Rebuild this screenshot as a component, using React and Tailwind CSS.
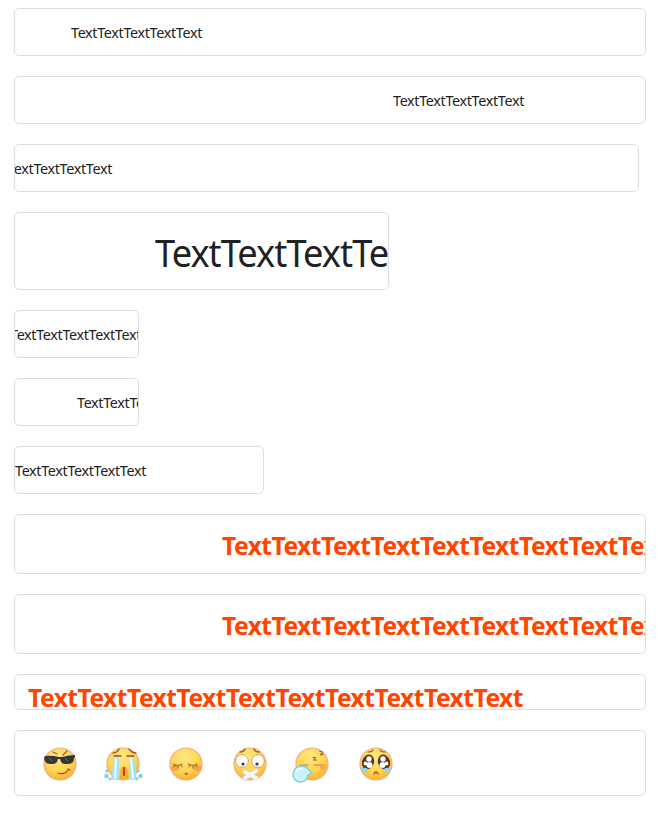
import React from "react";

const T5 = "TextTextTextTextText";
const T10 = T5 + T5;
const small = "text-[15px] leading-[22px] tracking-[-0.35px] text-[#202122] scale-x-[0.956]";
const bold = "text-[25px] leading-[36px] tracking-[-0.5px] font-bold text-[#ff4500] scale-x-[0.982]";

function Row({ box, text, children = T5 }) {
  return (
    <div className={`shrink-0 overflow-hidden rounded-[5px] border border-[#dedede] bg-white ${box}`}>
      <span className={`block w-max origin-left whitespace-nowrap ${text}`}>{children}</span>
    </div>
  );
}

function Face({ id, className, children }) {
  return (
    <svg viewBox="0 0 44 40" className={`h-10 w-11 shrink-0 ${className}`} fill="none" strokeLinecap="round" strokeLinejoin="round">
      <defs>
        <radialGradient id={id} cx="45%" cy="28%" r="75%">
          <stop offset="0" stopColor="#ffe783" />
          <stop offset="0.6" stopColor="#ffd552" />
          <stop offset="1" stopColor="#f8ad35" />
        </radialGradient>
      </defs>
      <circle cx="22" cy="20" r="16" fill={`url(#${id})`} stroke="#f0b07c" strokeWidth="1.2" />
      {children}
    </svg>
  );
}

function Emojis() {
  return (
    <div className="flex pl-[23px] pt-[13px]">
      <Face id="cool">
        <path d="M15 8l4 2M29 7l-4 4" stroke="#a5532b" strokeWidth="1.2" />
        <path d="M7 12Q13 11 21 13h3Q31 11 37 11v2l-1 1q0 6-6 6h-3q-4 0-5-5h-2q-1 5-5 5h-3q-5 0-6-6z" fill="#33373a" />
        <path d="M11 14l3 3m13-3 3 3" stroke="#666d70" strokeWidth="1" />
        <path d="M20 29q7 2 10-3M30 25l2 1" stroke="#a84c26" strokeWidth="1.3" />
      </Face>
      <Face id="cry" className="ml-[19px]">
        <path d="M12 9q4 0 6-4M28 5q3 4 7 4M13 12h7m6 0h7" stroke="#985225" strokeWidth="1.3" />
        <path d="M13 14h5v21q-4 2-8 0zM28 14h5l3 21q-4 2-8 0z" fill="#a4e3ef" />
        <path d="M15 15l-1 19m16-19 2 19" stroke="#effdff" strokeWidth="2" />
        <path d="M20 35v-8q0-4 3-4t3 4v8" fill="#f5b52f" stroke="#dda13c" strokeWidth=".8" />
        <path d="M23 24v7" stroke="#e12e17" strokeWidth="2" />
        <g fill="#8bd0e0"><circle cx="6" cy="27" r="1.8" /><circle cx="5.5" cy="32" r="2.3" /><circle cx="9" cy="35" r="1.6" /><circle cx="37" cy="27" r="1.8" /><circle cx="39.5" cy="32" r="2.3" /><circle cx="36" cy="35" r="1.6" /></g>
      </Face>
      <Face id="shy" className="ml-[19px]">
        <ellipse cx="11" cy="24" rx="4" ry="3" fill="#f39245" opacity=".65" />
        <ellipse cx="33" cy="24" rx="4" ry="3" fill="#f39245" opacity=".65" />
        <path d="M9 20q4 3 9 0M24 20q5 3 9 0M11 21l-1 2m4-1v2m3-3 1 2m8-2-1 2m4-1v2m3-3 1 2" stroke="#9b5927" strokeWidth="1" />
        <path d="M21 30l1.5.6 1.5-.6-1.5-1z" fill="#c94c25" stroke="#c94c25" strokeWidth=".6" />
      </Face>
      <Face id="mute" className="ml-5">
        <path d="M12 8q4 0 5-3M26 5q1 3 5 3" stroke="#985225" strokeWidth="1.3" />
        <circle cx="14" cy="17" r="6.4" fill="#fff" stroke="#d99b58" strokeWidth=".9" />
        <circle cx="30" cy="17" r="6.4" fill="#fff" stroke="#d99b58" strokeWidth=".9" />
        <circle cx="15" cy="20" r="1.6" fill="#3c3835" /><circle cx="29" cy="20" r="1.6" fill="#3c3835" />
        <path d="M17 28l11 6M28 27l-11 7" stroke="#c9ccce" strokeWidth="5" />
        <path d="M17 28l11 6M28 27l-11 7" stroke="#f5f6f7" strokeWidth="3.8" />
      </Face>
      <Face id="sleep" className="ml-[18px]">
        <path d="M10 21h8M24 21h8" stroke="#cf7630" strokeWidth="1.2" />
        <path d="M29.5 7l3 1-2 3 3-1M23 13.5h2.5l-2 2.500h3" stroke="#a35b2d" strokeWidth="1.1" />
        <circle cx="33" cy="23" r="3" fill="#f39a42" opacity=".6" />
        <path d="M22 29l-4 2q-1 7-8 7-7-1-7-8 1-8 9-8 4 0 6 3z" fill="#c9f2fb" stroke="#75cfe4" strokeWidth="1.3" />
        <path d="M7 27q2-3 5-2" stroke="#fff" strokeWidth="1.6" />
      </Face>
      <Face id="sad" className="ml-5">
        <path d="M14 8q4 0 5-2M26 6q1 2 5 2" stroke="#a25b29" strokeWidth="1.2" />
        <ellipse cx="14" cy="18" rx="6" ry="7.5" transform="rotate(18 14 18)" fill="#54382b" /><ellipse cx="30" cy="18" rx="6" ry="7.5" transform="rotate(-18 30 18)" fill="#54382b" />
        <g fill="#fff"><circle cx="15" cy="15" r="2.7" /><circle cx="29" cy="15" r="2.7" /><circle cx="15.5" cy="21" r="2.9" /><circle cx="28.5" cy="21" r="2.9" /><circle cx="11.5" cy="19.5" r="1.9" /><circle cx="32.5" cy="19.5" r="1.9" /></g>
        <ellipse cx="10.5" cy="26" rx="3.4" ry="2.3" fill="#8bd9ec" /><ellipse cx="33.5" cy="26" rx="3.4" ry="2.3" fill="#8bd9ec" />
        <path d="M20 30q2-4 4 0" stroke="#b34b22" strokeWidth="1.4" />
      </Face>
    </div>
  );
}

export default function App() {
  return (
    <main className="flex h-[816px] w-[661px] flex-col items-start gap-5 overflow-hidden bg-white px-3.5 pt-2 font-['Noto_Sans',sans-serif]">
      <Row box="h-12 w-[632px] pt-3 pl-14" text={small} />
      <Row box="h-12 w-[632px] pt-3 pl-[378px]" text={small} />
      <Row box="h-12 w-[625px] pt-3" text={`${small} -ml-[34px]`} />
      <Row box="h-[78px] w-[375px] pt-[11px] pl-[140px]" text="text-[38px] leading-[56px] tracking-[-1px] text-[#202122] scale-x-[0.953]" />
      <Row box="h-12 w-[125px] pt-3" text={`${small} -ml-[5px]`} />
      <Row box="h-12 w-[125px] pt-3 pl-[62px]" text={small} />
      <Row box="h-12 w-[250px] pt-3" text={small} />
      <Row box="h-[60px] w-[632px] pt-3 pl-[207px]" text={bold}>{T10}</Row>
      <Row box="h-[60px] w-[632px] pt-3 pl-[207px]" text={bold}>{T10}</Row>
      <Row box="h-9 w-[632px] pt-1 pl-[13px]" text={bold}>{T10}</Row>
      <div className="h-[66px] w-[632px] shrink-0 rounded-[5px] border border-[#dedede]"><Emojis /></div>
    </main>
  );
}
